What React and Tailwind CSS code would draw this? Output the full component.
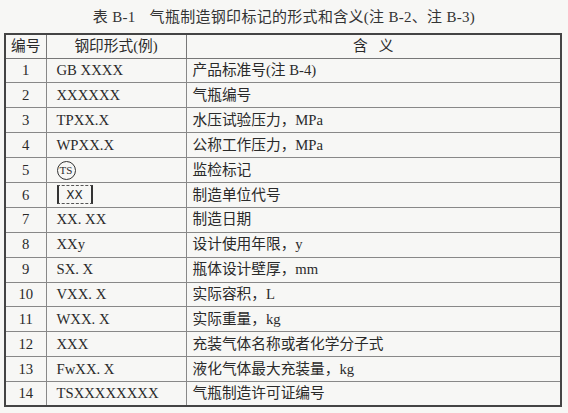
const rows = [
  ['1', 'GB XXXX', '产品标准号(注 B-4)'],
  ['2', 'XXXXXX', '气瓶编号'],
  ['3', 'TPXX.X', '水压试验压力，MPa'],
  ['4', 'WPXX.X', '公称工作压力，MPa'],
  ['5', 'TS', '监检标记'],
  ['6', 'XX', '制造单位代号'],
  ['7', 'XX. XX', '制造日期'],
  ['8', 'XXy', '设计使用年限，y'],
  ['9', 'SX. X', '瓶体设计壁厚，mm'],
  ['10', 'VXX. X', '实际容积，L'],
  ['11', 'WXX. X', '实际重量，kg'],
  ['12', 'XXX', '充装气体名称或者化学分子式'],
  ['13', 'FwXX. X', '液化气体最大充装量，kg'],
  ['14', 'TSXXXXXXXX', '气瓶制造许可证编号'],
];

const font = { fontFamily: '"Liberation Serif", "Noto Sans CJK SC", serif' };

function Mark({ n, text }) {
  if (n === '5') {
    return (
      <span className="inline-flex h-[19px] w-[19px] items-center justify-center rounded-full border border-[#333] text-[11px] leading-none">
        TS
      </span>
    );
  }
  if (n === '6') {
    return (
      <span className="relative inline-flex h-[19px] w-[36px] items-center justify-center border-x-2 border-y border-dashed border-x-[#333] border-y-[#555] text-[12px] leading-none [border-left-style:solid] [border-right-style:solid]"
        style={{ fontFamily: '"DejaVu Sans", sans-serif' }}>
        {text}
      </span>
    );
  }
  return text;
}

export default function App() {
  return (
    <div className="h-[413px] w-[568px] bg-[#f7f7f5] pt-[8px] text-[#2a2a2a]" style={font}>
      <h1 className="mb-[7px] flex justify-center gap-[14px] text-[15px] font-normal leading-[18px] tracking-[0.3px] text-[#333]">
        <span>表 B-1</span>
        <span>气瓶制造钢印标记的形式和含义(注 B-2、注 B-3)</span>
      </h1>
      <table className="ml-[4px] w-[558px] table-fixed border-collapse border-2 border-[#444] text-[14.7px]">
        <colgroup>
          <col className="w-[41px]" />
          <col className="w-[140px]" />
          <col />
        </colgroup>
        <thead>
          <tr className="h-[24px]">
            <th className="border border-[#777] text-center font-normal">编号</th>
            <th className="border border-[#777] text-center font-normal">钢印形式(例)</th>
            <th className="border border-[#777] text-center font-normal">含&nbsp;&nbsp;&nbsp;义</th>
          </tr>
        </thead>
        <tbody>
          {rows.map(([n, mark, meaning]) => (
            <tr key={n} className="h-[24.9px]">
              <td className="border border-[#888] text-center leading-none">{n}</td>
              <td className="border border-[#888] pl-[10px] leading-none">
                <Mark n={n} text={mark} />
              </td>
              <td className="border border-[#888] pl-[6px] leading-none">{meaning}</td>
            </tr>
          ))}
        </tbody>
      </table>
    </div>
  );
}
